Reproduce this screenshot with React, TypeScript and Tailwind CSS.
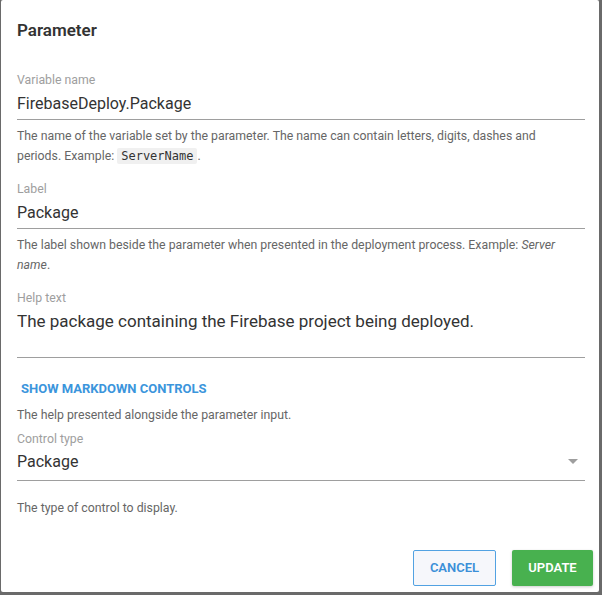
import React from "react";

function Label({ children, className = "" }: { children: React.ReactNode; className?: string }) {
  return <div className={`text-[12.3px] leading-[16px] text-[#9e9e9e] ${className}`}>{children}</div>;
}

function Helper({ children, className = "" }: { children: React.ReactNode; className?: string }) {
  return <div className={`text-[12.3px] leading-[20px] text-[#666666] pr-[16px] ${className}`}>{children}</div>;
}

export default function App() {
  return (
    <div
      className="w-[602px] h-[595px] bg-[#6a6a6a] pl-[1px] overflow-hidden"
      style={{ fontFamily: "Roboto, 'Noto Sans', sans-serif" }}
    >
      <div className="w-[598px] h-[592px] bg-white rounded-[2px] pl-[16px] pr-[14px] flex flex-col">
        <div className="mt-[18px] text-[17px] leading-[24px] font-semibold text-[#333333]">Parameter</div>

        <Label className="mt-[30px]">Variable name</Label>
        <div className="mt-[4px] text-[16px] leading-[24px] text-[#333333] pb-[3px] border-b border-[#9e9e9e]">
          FirebaseDeploy.Package
        </div>
        <Helper className="mt-[6px]">
          The name of the variable set by the parameter. The name can contain letters, digits, dashes and periods. Example:{" "}
          <code
            className="bg-[#f0f0f0] px-[4px] py-[1px] rounded-[2px] text-[12px] text-[#333333]"
            style={{ fontFamily: "'DejaVu Sans Mono', 'Liberation Mono', monospace" }}
          >
            ServerName
          </code>
          .
        </Helper>

        <Label className="mt-[15px]">Label</Label>
        <div className="mt-[4px] text-[16px] leading-[24px] text-[#333333] pb-[3px] border-b border-[#9e9e9e]">
          Package
        </div>
        <Helper className="mt-[6px]">
          The label shown beside the parameter when presented in the deployment process. Example: <em>Server name</em>.
        </Helper>

        <Label className="mt-[15px]">Help text</Label>
        <div className="mt-[3px] h-[49px] text-[17px] leading-[24px] text-[#333333] border-b border-[#9e9e9e]">
          The package containing the Firebase project being deployed.
        </div>

        <div className="mt-[23px] pl-[4px] text-[13px] leading-[16px] font-bold text-[#3b95dc]">
          SHOW MARKDOWN CONTROLS
        </div>
        <Helper className="mt-[8px]">The help presented alongside the parameter input.</Helper>

        <Label className="mt-[6px]">Control type</Label>
        <div className="mt-[3px] flex items-center justify-between text-[16px] leading-[24px] text-[#333333] pb-[6px] border-b border-[#9e9e9e]">
          <span>Package</span>
          <svg width="10" height="5" viewBox="0 0 10 5" className="mr-[7px] -mt-[1px]">
            <polygon points="0,0 10,0 5,5" fill="#9e9e9e" />
          </svg>
        </div>
        <Helper className="mt-[17px]">The type of control to display.</Helper>

        <div className="mt-[32px] flex justify-end gap-[16px] -mr-[8px]">
          <button className="w-[83px] h-[36px] border border-[#52a2e2] bg-[#f6f7fb] rounded-[2px] text-[13px] font-semibold text-[#3b8fd8]">
            CANCEL
          </button>
          <button className="w-[81px] h-[36px] bg-[#48b14f] rounded-[2px] text-[13px] font-semibold text-white shadow-[0_1px_3px_rgba(0,0,0,0.2)]">
            UPDATE
          </button>
        </div>
      </div>
    </div>
  );
}
